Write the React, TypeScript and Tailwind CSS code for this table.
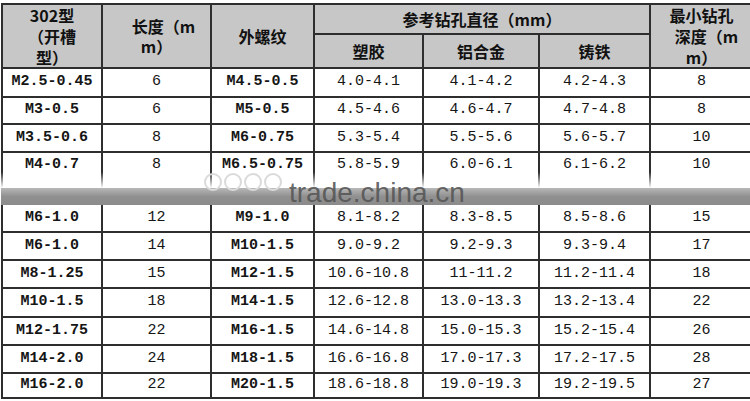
const cols = "grid grid-cols-[98px_107px_101px_107px_114px_109px_101px] gap-x-[2px]";

const topRows = [
  ["M2.5-0.45", "6", "M4.5-0.5", "4.0-4.1", "4.1-4.2", "4.2-4.3", "8"],
  ["M3-0.5", "6", "M5-0.5", "4.5-4.6", "4.6-4.7", "4.7-4.8", "8"],
  ["M3.5-0.6", "8", "M6-0.75", "5.3-5.4", "5.5-5.6", "5.6-5.7", "10"],
  ["M4-0.7", "8", "M6.5-0.75", "5.8-5.9", "6.0-6.1", "6.1-6.2", "10"],
];

const bottomRows = [
  ["M6-1.0", "12", "M9-1.0", "8.1-8.2", "8.3-8.5", "8.5-8.6", "15"],
  ["M6-1.0", "14", "M10-1.5", "9.0-9.2", "9.2-9.3", "9.3-9.4", "17"],
  ["M8-1.25", "15", "M12-1.5", "10.6-10.8", "11-11.2", "11.2-11.4", "18"],
  ["M10-1.5", "18", "M14-1.5", "12.6-12.8", "13.0-13.3", "13.2-13.4", "22"],
  ["M12-1.75", "22", "M16-1.5", "14.6-14.8", "15.0-15.3", "15.2-15.4", "26"],
  ["M14-2.0", "24", "M18-1.5", "16.6-16.8", "17.0-17.3", "17.2-17.5", "28"],
  ["M16-2.0", "22", "M20-1.5", "18.6-18.8", "19.0-19.3", "19.2-19.5", "27"],
];

const cjk = "font-['Noto_Sans_CJK_SC',sans-serif] font-bold text-[16px] text-[#111]";
const mono = "font-['Liberation_Mono',monospace] text-[15px] text-[#151515]";

function Cells({ row, top }: { row: string[]; top?: boolean }) {
  return (
    <>
      {row.map((v, i) => (
        <div
          key={i}
          className={`bg-white flex justify-center ${top ? "items-start pt-[1px]" : "items-center"} ${mono} ${
            i === 0 || i === 2 ? "font-bold" : "font-normal"
          }`}
        >
          {v}
        </div>
      ))}
    </>
  );
}

export default function App() {
  return (
    <div className="relative w-[750px] h-[401px] bg-white overflow-hidden">
      <div className="flex flex-col w-[752px] ml-[1px]">
        <div
          className={`${cols} mt-[3px] pt-[2px] pl-[2px] gap-y-[2px] bg-[#2e2e2e] grid-rows-[28px_32px_27px_25px_26px_35px]`}
        >
          <div className={`row-span-2 bg-[#c7c7c7] flex flex-col items-center leading-[21px] ${cjk}`}>
            <span className="h-[21px]">302型</span>
            <span className="h-[21px]">（开槽</span>
            <span className="h-[21px]">型）</span>
          </div>
          <div className={`row-span-2 bg-[#c7c7c7] flex flex-col items-center justify-center leading-[20px] ${cjk}`}>
            <span className="h-[20px] pl-[14px]">长度（m</span>
            <span className="h-[20px]">m）</span>
          </div>
          <div className={`row-span-2 bg-[#c7c7c7] flex items-center justify-center ${cjk}`}>外螺纹</div>
          <div className={`col-span-3 bg-[#c7c7c7] flex items-center justify-center ${cjk}`}>
            参考钻孔直径（mm）
          </div>
          <div className={`row-span-2 bg-[#c7c7c7] flex flex-col items-center leading-[21px] ${cjk}`}>
            <span className="h-[21px]">最小钻孔</span>
            <span className="h-[21px] pl-[10px]">深度（m</span>
            <span className="h-[21px]">m）</span>
          </div>
          <div className={`bg-[#c7c7c7] flex items-center justify-center ${cjk}`}>塑胶</div>
          <div className={`bg-[#c7c7c7] flex items-center justify-center ${cjk}`}>铝合金</div>
          <div className={`bg-[#c7c7c7] flex items-center justify-center ${cjk}`}>铸铁</div>
          {topRows.map((r, i) => (
            <Cells key={i} row={r} top={i === topRows.length - 1} />
          ))}
        </div>

        <div className="h-[17px] bg-linear-to-b from-[#b8b8b8] via-[#909090] to-[#8b8b8b]" />

        <div
          className={`${cols} pb-[2px] pl-[2px] gap-y-[2px] bg-[#2e2e2e] grid-rows-[26px_26px_26px_27px_26px_26px_23px]`}
        >
          {bottomRows.map((r, i) => (
            <Cells key={i} row={r} />
          ))}
        </div>
      </div>

      {/* fade above the watermark band */}
      <div className="absolute left-0 top-[172px] w-[750px] h-[16px] bg-linear-to-b from-white/0 to-white" />

      <svg className="absolute left-[203px] top-[170px]" width="82" height="22" viewBox="0 0 82 22">
        {[10, 30, 50, 70].map((cx) => (
          <circle key={cx} cx={cx} cy="12" r="8" fill="none" stroke="#dadada" strokeWidth="2" />
        ))}
      </svg>

      <div className="absolute left-[289px] top-[179px] font-['Liberation_Sans',sans-serif] text-[28px] leading-[28px] text-[#555555]/90">
        trade.china.cn
      </div>
    </div>
  );
}
